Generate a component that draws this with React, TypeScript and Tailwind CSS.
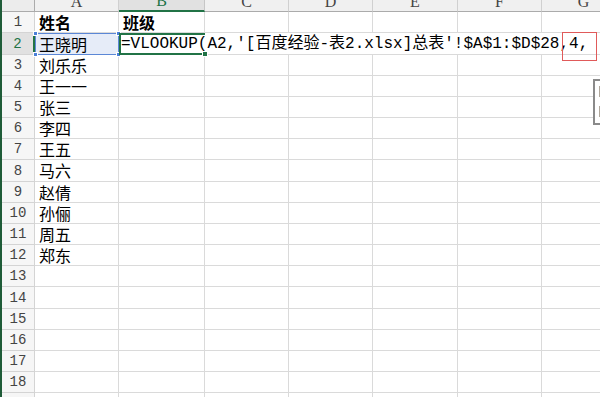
import React from 'react';

const COLS = [
  { key: 'A', w: 'w-[84px]' },
  { key: 'B', w: 'w-[86px]' },
  { key: 'C', w: 'w-[84px]' },
  { key: 'D', w: 'w-[84px]' },
  { key: 'E', w: 'w-[85px]' },
  { key: 'F', w: 'w-[84px]' },
  { key: 'G', w: 'w-[84px]' },
];

const NAMES: Record<number, string> = {
  3: '刘乐乐',
  4: '王一一',
  5: '张三',
  6: '李四',
  7: '王五',
  8: '马六',
  9: '赵倩',
  10: '孙俪',
  11: '周五',
  12: '郑东',
};

const cjk = "font-['Noto_Sans_CJK_SC',sans-serif]";
const mono = "font-['Liberation_Mono','Noto_Sans_CJK_SC',monospace]";

const rowHeight = (n: number) => ([2, 8, 14].includes(n) ? 'h-[22px]' : 'h-[21px]');

const RowHeader: React.FC<{ n: number; active?: boolean }> = ({ n, active }) => (
  <div
    className={`w-[33px] shrink-0 flex items-center justify-center text-[14px] leading-[18px] ${mono} ${
      active
        ? 'bg-[#e1e1e1] text-[#217346] border-r-2 border-r-[#217346] border-b border-b-[#d4d4d4]'
        : 'bg-[#f6f6f6] text-[#444] border-r border-b border-[#d4d4d4]'
    }`}
  >
    {n}
  </div>
);

const Row: React.FC<{ n: number }> = ({ n }) => (
  <div className={`flex ${rowHeight(n)}`}>
    <RowHeader n={n} />
    {COLS.map((c, i) => (
      <div
        key={c.key}
        className={`${c.w} shrink-0 border-r border-b border-[#dadada] flex items-center pl-[4px] text-[16px] text-black leading-[19px] ${cjk} ${
          n === 1 && i < 2 ? 'font-bold' : ''
        }`}
      >
        {n === 1 && i === 0 ? '姓名' : null}
        {n === 1 && i === 1 ? '班级' : null}
        {i === 0 && NAMES[n] ? NAMES[n] : null}
      </div>
    ))}
  </div>
);

const Handle: React.FC<{ className: string }> = ({ className }) => (
  <div className={`absolute w-[5px] h-[5px] bg-[#4a7fd8] border border-white ${className}`} />
);

const FormulaRow: React.FC = () => (
  <div className="flex h-[22px]">
    <RowHeader n={2} active />
    <div className={`relative w-[84px] shrink-0 bg-[#e6ecf8] border border-[#5b87d6] flex items-center pl-[3px] text-[16px] text-black leading-[19px] ${cjk}`}>
      王晓明
      <Handle className="-left-[3px] -top-[3px]" />
      <Handle className="-right-[3px] -top-[3px]" />
      <Handle className="-left-[3px] -bottom-[3px]" />
      <Handle className="-right-[3px] -bottom-[3px]" />
    </div>
    <div
      className={`relative w-[86px] shrink-0 border-2 border-r-0 border-[#217346] flex items-center whitespace-nowrap text-[16px] text-black leading-[18px] ${mono}`}
    >
      <span className="relative z-10 bg-white pr-[2px]">=VLOOKUP(A2,'[百度经验-表2.xlsx]总表'!$A$1:$D$28,4,</span>
      <div className="absolute -right-[3px] -bottom-[4px] w-[6px] h-[6px] bg-[#217346] border border-white z-20" />
    </div>
    {COLS.slice(2).map((c) => (
      <div key={c.key} className={`${c.w} shrink-0 border-b border-[#dadada]`} />
    ))}
  </div>
);

const App: React.FC = () => {
  const rows = Array.from({ length: 18 }, (_, i) => i + 1);
  return (
    <div className="relative w-[600px] h-[397px] overflow-hidden bg-white border-l-2 border-[#1f5c38]">
      <div className="flex h-[12px]">
        <div className="w-[33px] shrink-0 bg-[#ececec] border-r border-b border-[#ababab]" />
        {COLS.map((c, i) => (
          <div
            key={c.key}
            className={`${c.w} shrink-0 flex items-end justify-center overflow-hidden text-[16px] leading-none font-['Liberation_Serif',serif] ${
              i === 1
                ? 'bg-[#e1e1e1] text-[#217346] border-r border-r-[#c6c6c6] border-b-2 border-b-[#217346]'
                : 'bg-[#f0f0f0] text-[#444] border-r border-b border-r-[#d0d0d0] border-b-[#ababab]'
            }`}
          >
            <span className="mb-[1px]">{c.key}</span>
          </div>
        ))}
      </div>
      {rows.map((n) => (n === 2 ? <FormulaRow key={n} /> : <Row key={n} n={n} />))}
      <Row n={19} />

      <div className="absolute left-[560px] top-[32px] w-[35px] h-[29px] border border-[#e05a5a] z-30" />

      <div className="absolute left-[591px] top-[79px] w-[14px] h-[46px] border-2 border-[#8a8a8a] bg-white z-30">
        <div className="absolute left-[4px] top-[5px] w-[2px] h-[11px] bg-[#b0a89c]" />
        <div className="absolute left-[4px] top-[25px] w-[2px] h-[11px] bg-[#b0a89c]" />
      </div>
    </div>
  );
};

export default App;
